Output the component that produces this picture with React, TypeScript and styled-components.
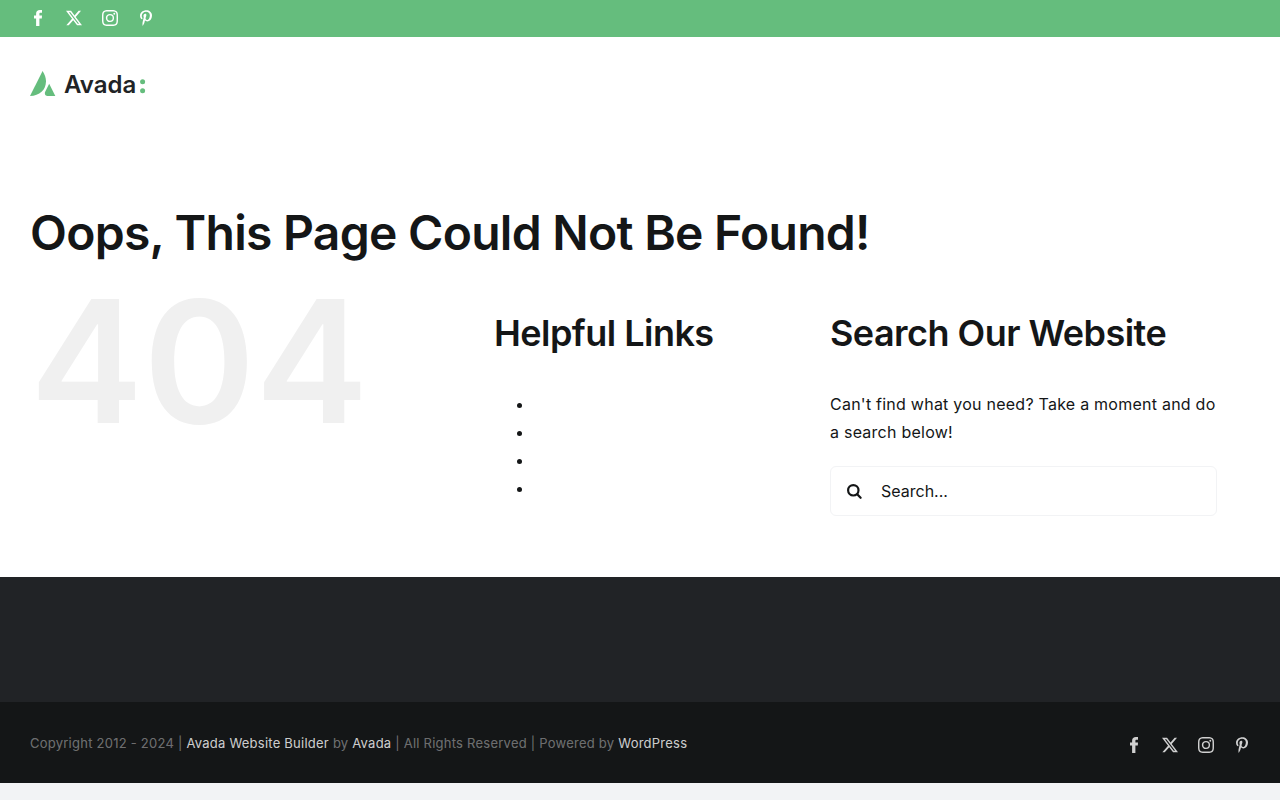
import React from "react";
import styled, { createGlobalStyle } from "styled-components";
import { BsInstagram, BsTwitterX } from "react-icons/bs";
import { FaPinterestP } from "react-icons/fa";

const GlobalStyle = createGlobalStyle`
  *, *::before, *::after { box-sizing: border-box; }
  body {
    margin: 0;
    background: #f2f3f5;
    color: #141617;
    font-family: Inter, "Liberation Sans", sans-serif;
    font-size: 16px;
    font-weight: 400;
    line-height: 28px;
    letter-spacing: 0.015em;
  }
`;

const Page = styled.div`
  background: #fff;
`;

const TopBar = styled.div`
  display: flex;
  align-items: center;
  height: 37px;
  padding: 0 30px 2px;
  background: #65bd7d;
`;

const SocialList = styled.ul`
  display: flex;
  gap: 20px;
  margin: 0;
  padding: 0;
  list-style: none;
`;

const SocialLink = styled.a<{ $color: string }>`
  display: flex;
  align-items: center;
  justify-content: center;
  width: 16px;
  height: 16px;
  color: ${(p) => p.$color};

  svg {
    display: block;
    height: 16px;
  }
`;

const Header = styled.header`
  padding: 34px 30px 87px;
`;

const LogoLink = styled.a`
  display: block;
  width: 116px;

  svg {
    display: block;
  }
`;

const Main = styled.main`
  padding: 0 30px 61px;
`;

const Title = styled.h1`
  margin: 0;
  padding: 10px 0;
  font-size: 48px;
  font-weight: 600;
  line-height: 66px;
  letter-spacing: -0.015em;
`;

const Columns = styled.div`
  display: grid;
  grid-template-columns: 464fr 336fr 420fr;
`;

const Column = styled.section`
  padding-right: 33px;
`;

const ErrorCode = styled.div`
  color: #f0f0f0;
  font-size: 170px;
  font-weight: 600;
  line-height: 170px;
  letter-spacing: 0;
`;

const Subtitle = styled.h2`
  margin: 0 0 32px;
  padding-top: 32px;
  font-size: 36px;
  font-weight: 600;
  line-height: 50px;
  letter-spacing: -0.015em;
  white-space: nowrap;
`;

const HelpfulList = styled.ul`
  margin: 0;
  padding-left: 40px;
`;

const Intro = styled.p`
  margin: 0 0 20px;
`;

const SearchForm = styled.form`
  display: flex;
  height: 50px;
  border: 1px solid #f2f3f5;
  border-radius: 6px;
  background: #fff;
`;

const SearchButton = styled.button`
  display: flex;
  align-items: center;
  justify-content: center;
  width: 46px;
  padding: 0;
  border: 0;
  background: transparent;
  color: #141617;
`;

const SearchInput = styled.input`
  flex: 1;
  min-width: 0;
  padding: 0 4px;
  border: 0;
  outline: 0;
  background: transparent;
  color: #141617;
  font: inherit;
  letter-spacing: normal;

  &::placeholder {
    color: #141617;
    opacity: 1;
  }
`;

const WidgetArea = styled.div`
  height: 125px;
  background: #212326;
`;

const CopyrightBar = styled.footer`
  display: flex;
  align-items: center;
  justify-content: space-between;
  padding: 28px 30px 23px;
  background: #141617;
`;

const Copyright = styled.p`
  margin: 0 0 4px;
  color: rgba(255, 255, 255, 0.4);
  font-size: 13px;
  line-height: 26px;
`;

const CopyrightLink = styled.a`
  color: rgba(255, 255, 255, 0.8);
  text-decoration: none;
`;

function FacebookIcon() {
  return (
    <svg width="8" height="16" viewBox="0 0 8 16" fill="currentColor" aria-hidden="true">
      <path d="M5.4 16V8.6h2.4L8 5.6H5.4V4.1c0-.8.2-1.3 1.3-1.3H8V.1C7.7.1 6.9 0 5.9 0 3.6 0 2.1 1.2 2.1 3.7v1.9H0v3h2.1V16z" />
    </svg>
  );
}

function SearchIcon() {
  return (
    <svg width="15" height="15" viewBox="0 0 15 15" fill="none" stroke="currentColor" aria-hidden="true">
      <circle cx="6.3" cy="6.3" r="5.2" strokeWidth="2.2" />
      <path d="M10.2 10.2 13.6 13.8" strokeWidth="2.2" strokeLinecap="round" />
    </svg>
  );
}

function Logo() {
  return (
    <svg width="116" height="32" viewBox="0 0 116 32" role="img" aria-label="Avada">
      <path d="M12.6 0C14.6 3.4 16 6.7 16 10.3 16 18.8 9.5 25 0 25z" fill="#65bd7d" />
      <path d="M19.2 12.8 25.3 25H17.4C14.9 25 14.3 22.6 15.3 20.6z" fill="#65bd7d" />
      <text x="34" y="22" fontFamily="Inter, sans-serif" fontSize="24" fontWeight="600" letterSpacing="0" fill="#212326">
        Avada
      </text>
      <circle cx="112.6" cy="10.7" r="2.5" fill="#65bd7d" />
      <circle cx="112.6" cy="19.8" r="2.5" fill="#65bd7d" />
    </svg>
  );
}

const networks = [
  { name: "Facebook", icon: <FacebookIcon /> },
  { name: "X", icon: <BsTwitterX size={16} /> },
  { name: "Instagram", icon: <BsInstagram size={16} /> },
  { name: "Pinterest", icon: <FaPinterestP size={16} /> },
];

function SocialLinks({ color }: { color: string }) {
  return (
    <SocialList>
      {networks.map((n) => (
        <li key={n.name}>
          <SocialLink href="#" aria-label={n.name} $color={color}>
            {n.icon}
          </SocialLink>
        </li>
      ))}
    </SocialList>
  );
}

export default function App() {
  return (
    <>
      <GlobalStyle />
      <Page>
        <TopBar>
          <SocialLinks color="#fff" />
        </TopBar>
        <Header>
          <LogoLink href="#">
            <Logo />
          </LogoLink>
        </Header>
        <Main>
          <Title>Oops, This Page Could Not Be Found!</Title>
          <Columns>
            <ErrorCode>404</ErrorCode>
            <Column>
              <Subtitle>Helpful Links</Subtitle>
              <HelpfulList>
                <li />
                <li />
                <li />
                <li />
              </HelpfulList>
            </Column>
            <Column>
              <Subtitle>Search Our Website</Subtitle>
              <Intro>Can't find what you need? Take a moment and do a search below!</Intro>
              <SearchForm role="search" onSubmit={(e) => e.preventDefault()}>
                <SearchButton type="submit" aria-label="Search">
                  <SearchIcon />
                </SearchButton>
                <SearchInput type="search" placeholder="Search..." aria-label="Search for" />
              </SearchForm>
            </Column>
          </Columns>
        </Main>
        <WidgetArea />
        <CopyrightBar>
          <Copyright>
            Copyright 2012 - 2024 | <CopyrightLink href="#">Avada Website Builder</CopyrightLink> by{" "}
            <CopyrightLink href="#">Avada</CopyrightLink> | All Rights Reserved | Powered by{" "}
            <CopyrightLink href="#">WordPress</CopyrightLink>
          </Copyright>
          <SocialLinks color="rgba(255, 255, 255, 0.8)" />
        </CopyrightBar>
      </Page>
    </>
  );
}
